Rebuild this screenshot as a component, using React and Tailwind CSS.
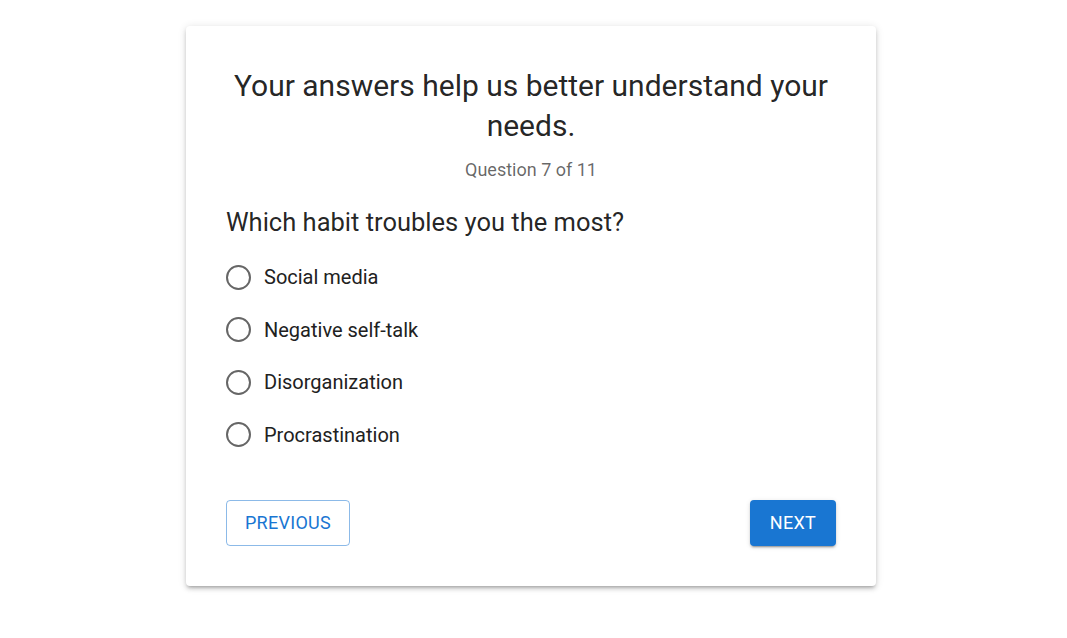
import React, { useState } from "react";

const OPTIONS = ["Social media", "Negative self-talk", "Disorganization", "Procrastination"];

function RadioRow({ label, checked, onChange }) {
  return (
    <label className="flex items-center h-[42px] cursor-pointer">
      <span
        className={
          "w-[25px] h-[25px] rounded-full border-2 flex items-center justify-center " +
          (checked ? "border-[#1976d2]" : "border-[#666666]")
        }
      >
        {checked && <span className="w-[11px] h-[11px] rounded-full bg-[#1976d2]" />}
      </span>
      <input type="radio" className="hidden" checked={checked} onChange={onChange} />
      <span className="ml-[13px] text-[20px] leading-[28px] text-[#212121]">{label}</span>
    </label>
  );
}

export default function App() {
  const [choice, setChoice] = useState(null);

  return (
    <div className="min-h-screen bg-white flex justify-center pt-[26px] pr-[5px] font-['Roboto','Liberation_Sans',sans-serif]">
      <div className="w-[690px] bg-white rounded-[4px] shadow-[0px_3px_3px_-2px_rgba(0,0,0,0.2),0px_3px_4px_0px_rgba(0,0,0,0.14),0px_1px_8px_0px_rgba(0,0,0,0.12)] p-[40px] h-fit">
        <h1 className="text-center text-[30px] leading-[40px] text-[rgba(0,0,0,0.87)] font-normal">
          Your answers help us better understand your needs.
        </h1>
        <p className="text-center text-[18px] leading-[24px] text-[rgba(0,0,0,0.6)] mt-[12px]">
          Question 7 of 11
        </p>
        <h2 className="mt-[24px] text-[25.5px] leading-[32px] text-[rgba(0,0,0,0.87)] font-normal">
          Which habit troubles you the most?
        </h2>
        <div className="mt-[18px] flex flex-col gap-[10.5px]">
          {OPTIONS.map((o) => (
            <RadioRow key={o} label={o} checked={choice === o} onChange={() => setChoice(o)} />
          ))}
        </div>
        <div className="mt-[44px] flex justify-between">
          <button className="h-[46px] w-[124px] rounded-[4px] border border-[rgba(25,118,210,0.5)] text-[#1976d2] text-[18px] uppercase tracking-[0.3px]">
            Previous
          </button>
          <button className="h-[46px] w-[86px] rounded-[4px] bg-[#1976d2] text-white text-[18px] uppercase tracking-[0.3px] shadow-[0px_3px_1px_-2px_rgba(0,0,0,0.2),0px_2px_2px_0px_rgba(0,0,0,0.14),0px_1px_5px_0px_rgba(0,0,0,0.12)]">
            Next
          </button>
        </div>
      </div>
    </div>
  );
}
